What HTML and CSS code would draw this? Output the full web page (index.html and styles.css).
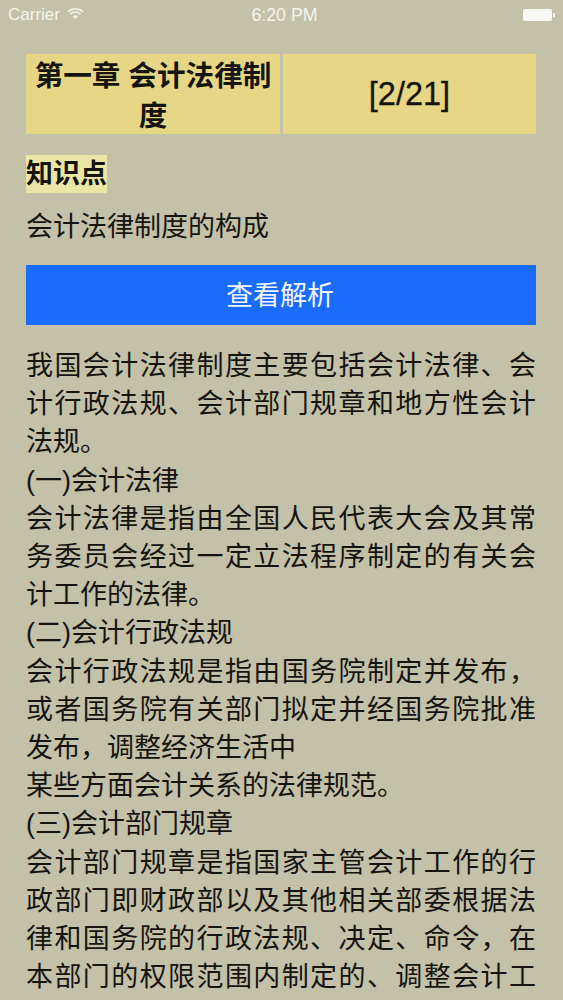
FILE: index.html
```html
<!DOCTYPE html>
<html lang="zh">
<head>
<meta charset="utf-8">
<title>会计法律制度</title>
<link rel="stylesheet" href="styles.css">
</head>
<body>
<div class="status">
  <div class="status-left">
    <span>Carrier</span>
    <svg class="wifi" width="17" height="13" viewBox="0 0 16 12"><path d="M1 4.2C5 .6 11 .6 15 4.2" fill="none" stroke="#f6f5e8" stroke-width="1.5"/><path d="M3.2 6.5C6 4 10 4 12.8 6.5" fill="none" stroke="#f6f5e8" stroke-width="1.5"/><path d="M5.4 8.6C7 7.3 9 7.3 10.6 8.6L8 11.2Z" fill="#f6f5e8"/></svg>
  </div>
  <div class="status-time">6:20 PM</div>
  <div class="status-right"><span class="battery"></span><span class="battery-tip"></span></div>
</div>
<main class="page">
  <div class="head">
    <div class="head-cell title">第一章 会计法律制度</div>
    <div class="head-cell count">[2/21]</div>
  </div>
  <div class="tag-row"><span class="tag">知识点</span></div>
  <p class="topic">会计法律制度的构成</p>
  <button class="action">查看解析</button>
  <div class="body-text">
    <div>我国会计法律制度主要包括会计法律、会计行政法规、会计部门规章和地方性会计法规。<br>(一)会计法律<br>会计法律是指由全国人民代表大会及其常务委员会经过一定立法程序制定的有关会计工作的法律。<br>(二)会计行政法规<br>会计行政法规是指由国务院制定并发布，或者国务院有关部门拟定并经国务院批准发布，调整经济生活中<br>某些方面会计关系的法律规范。<br>(三)会计部门规章</div>
    <div class="continued">会计部门规章是指国家主管会计工作的行政部门即财政部以及其他相关部委根据法律和国务院的行政法规、决定、命令，在本部门的权限范围内制定的、调整会计工</div>
  </div>
</main>
</body>
</html>
```
FILE: styles.css
```css
html, body {
  margin: 0;
  padding: 0;
  height: 1000px;
  overflow: hidden;
}
body {
  background: #c3c1a8;
  color: #16140f;
  font-family: "Liberation Sans", "Noto Sans CJK SC", sans-serif;
}
.status {
  height: 30px;
  display: grid;
  grid-template-columns: 1fr auto 1fr;
  align-items: center;
  padding: 0 2px 0 8px;
  color: #f6f5e8;
  font-size: 17px;
}
.status-left {
  display: flex;
  align-items: center;
  gap: 7px;
}
.wifi { margin-top: -3px; }
.status-time { font-size: 17.8px; }
.status-right {
  display: flex;
  justify-content: flex-end;
  align-items: center;
  padding-right: 6px;
}
.battery {
  width: 29px;
  height: 12px;
  background: #f8f8f2;
  border-radius: 2px;
}
.battery-tip {
  width: 2px;
  height: 4px;
  margin-left: 1px;
  background: #f6f5e8;
}
.page {
  padding: 24px 27px 0 26px;
}
.head {
  display: grid;
  grid-template-columns: 254px 253px;
  gap: 3px;
}
.head-cell {
  box-sizing: border-box;
  height: 80px;
  background: #e6d686;
  display: flex;
  align-items: center;
  justify-content: center;
  text-align: center;
  font-size: 28.6px;
  line-height: 40px;
}
.title {
  font-weight: 700;
  padding-top: 3px;
}
.count {
  font-size: 32.5px;
  -webkit-text-stroke: 0.3px #16140f;
}
.tag-row {
  margin-top: 21px;
  height: 40px;
}
.tag {
  display: inline-block;
  height: 38px;
  line-height: 39px;
  background: #eae7a6;
  font-size: 27px;
  font-weight: 700;
}
.topic {
  margin: 13px 0 0;
  font-size: 27px;
  line-height: 39px;
}
.action {
  display: block;
  width: 100%;
  height: 60px;
  margin-top: 18px;
  padding: 0 2px 3px 0;
  border: 0;
  border-radius: 0;
  background: #1a6cff;
  color: #f5f7ff;
  font: inherit;
  font-size: 27px;
}
.body-text {
  margin-top: 22px;
  font-size: 27px;
  line-height: 38.2px;
  text-align: justify;
}
.continued {
  text-align-last: justify;
}
```
